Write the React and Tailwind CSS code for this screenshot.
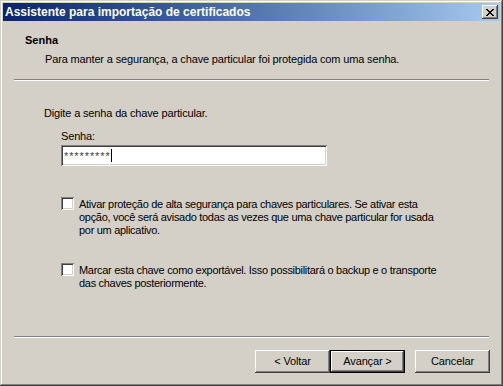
import React from "react";

const raised =
  "shadow-[inset_-1px_-1px_#404040,inset_1px_1px_#ffffff,inset_-2px_-2px_#808080,inset_2px_2px_#d4d0c8]";
const sunken =
  "shadow-[inset_1px_1px_#808080,inset_-1px_-1px_#ffffff,inset_2px_2px_#404040,inset_-2px_-2px_#d4d0c8]";

function Checkbox() {
  return <div className={`w-[13px] h-[13px] shrink-0 bg-white ${sunken}`} />;
}

function Button({ children, isDefault }) {
  if (isDefault) {
    return (
      <div className="w-[75px] h-[23px] border border-black">
        <div
          className={`w-full h-full flex items-center justify-center ${raised}`}
        >
          {children}
        </div>
      </div>
    );
  }
  return (
    <div
      className={`w-[75px] h-[23px] flex items-center justify-center ${raised}`}
    >
      {children}
    </div>
  );
}

export default function App() {
  return (
    <div
      className="w-[503px] h-[386px] bg-[#d4d0c8] p-[3px] flex flex-col text-[11px] leading-[13px] tracking-[-0.15px] text-black shadow-[inset_-1px_-1px_#404040,inset_1px_1px_#d4d0c8,inset_-2px_-2px_#808080,inset_2px_2px_#ffffff]"
      style={{ fontFamily: '"Liberation Sans", Arial, sans-serif' }}
    >
      {/* Title bar */}
      <div className="h-[18px] flex items-center justify-between pl-[2px] pr-[2px] bg-gradient-to-r from-[#0a246a] to-[#a6caf0]">
        <span className="text-white font-bold text-[12px] leading-[14px] tracking-[0px]">
          Assistente para importação de certificados
        </span>
        <div
          className={`w-[16px] h-[14px] flex items-center justify-center bg-[#d4d0c8] ${raised}`}
        >
          <svg width="8" height="7" viewBox="0 0 8 7" shapeRendering="crispEdges">
            <path
              d="M0 0h2v1h-2zM6 0h2v1h-2zM1 1h2v1h-2zM5 1h2v1h-2zM2 2h4v1h-4zM3 3h2v1h-2zM2 4h4v1h-4zM1 5h2v1h-2zM5 5h2v1h-2zM0 6h2v1h-2zM6 6h2v1h-2z"
              fill="#000"
            />
          </svg>
        </div>
      </div>

      {/* Header */}
      <div className="pl-[22px] mt-[13px] font-bold tracking-[0px]">Senha</div>
      <div className="pl-[42px] mt-[6px]">
        Para manter a segurança, a chave particular foi protegida com uma senha.
      </div>
      <div className="mx-[11px] mt-[13px] h-[2px] border-t border-t-[#808080] border-b border-b-white" />

      {/* Body */}
      <div className="pl-[41px] mt-[26px]">Digite a senha da chave particular.</div>
      <div className="pl-[58px] mt-[10px]">Senha:</div>
      <div className="pl-[58px] mt-[2px]">
        <div
          className={`w-[266px] h-[21px] bg-white flex items-center pl-[3px] ${sunken}`}
        >
          <span className="text-[11px] leading-[11px] tracking-[0.9px] text-[#404040] pt-[2px]">
            *********
          </span>
          <span className="w-[1px] h-[13px] bg-black" />
        </div>
      </div>

      <div className="pl-[58px] mt-[31px] flex items-start gap-[5px] tracking-[-0.3px]">
        <Checkbox />
        <div className="pt-[1px] whitespace-nowrap">
          Ativar proteção de alta segurança para chaves particulares. Se ativar esta
          <br />
          opção, você será avisado todas as vezes que uma chave particular for usada
          <br />
          por um aplicativo.
        </div>
      </div>

      <div className="pl-[58px] mt-[26px] flex items-start gap-[5px] tracking-[-0.3px]">
        <Checkbox />
        <div className="pt-[1px] whitespace-nowrap">
          Marcar esta chave como exportável. Isso possibilitará o backup e o transporte
          <br />
          das chaves posteriormente.
        </div>
      </div>

      {/* Footer */}
      <div className="mt-auto">
        <div className="mx-[11px] h-[2px] border-t border-t-[#808080] border-b border-b-white" />
        <div className="mt-[12px] mb-[10px] flex justify-end pr-[10px]">
          <Button>&lt; Voltar</Button>
          <Button isDefault>Avançar &gt;</Button>
          <div className="w-[10px]" />
          <Button>Cancelar</Button>
        </div>
      </div>
    </div>
  );
}
